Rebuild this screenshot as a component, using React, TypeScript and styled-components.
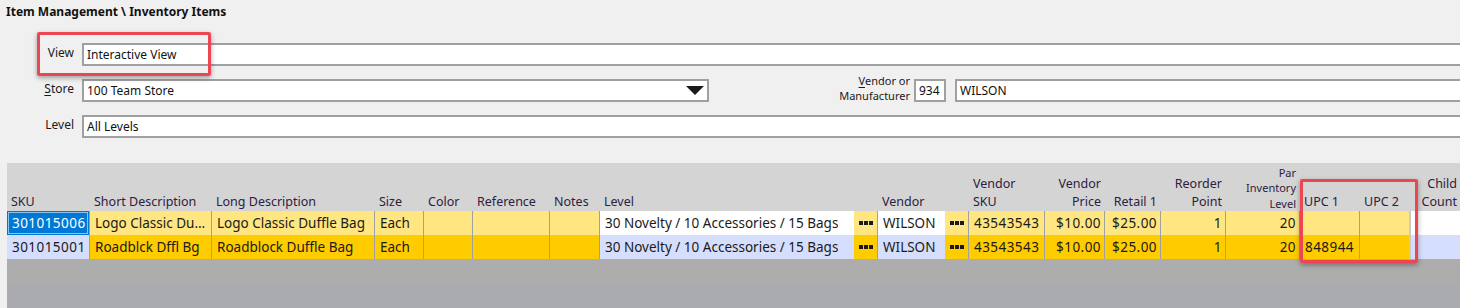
import React from 'react';
import styled, { createGlobalStyle } from 'styled-components';

const GlobalStyle = createGlobalStyle`
  html, body {
    margin: 0;
    padding: 0;
    background: #f0f0f0;
    overflow: hidden;
  }
  body {
    font-family: "Noto Sans", "Open Sans", Arial, sans-serif;
    color: #1a1a1a;
  }
`;

const Screen = styled.div`
  position: relative;
  width: 1500px;
  height: 308px;
  overflow: hidden;
  background: #f0f0f0;
`;

const Title = styled.div`
  height: 24px;
  box-sizing: border-box;
  padding: 4px 0 0 6px;
  font-size: 12px;
  font-weight: 700;
  line-height: 16px;
  color: #111;
`;

const Form = styled.div`
  display: flex;
  flex-direction: column;
  gap: 13px;
  padding-top: 19px;
`;

const FieldRow = styled.div`
  display: flex;
  align-items: flex-start;
  height: 23px;
`;

const Label = styled.label`
  width: 78px;
  box-sizing: border-box;
  padding: 2px 4px 0 0;
  margin-right: 4px;
  text-align: right;
  font-size: 12px;
  line-height: 16px;
  color: #1a1a1a;

  u {
    text-decoration: underline;
    text-underline-offset: 2px;
  }
`;

const TextBox = styled.div<{ $width?: number }>`
  ${(p) => (p.$width ? `width: ${p.$width}px; flex: none;` : 'flex: 1;')}
  height: 23px;
  box-sizing: border-box;
  border: 2px solid #a0a0a0;
  background: #fff;
  display: flex;
  align-items: center;
  justify-content: space-between;
  padding: 0 3px 0 3px;
  font-size: 12px;
  color: #111;
  white-space: nowrap;
`;

const DropArrow = styled.span`
  width: 0;
  height: 0;
  border-left: 9px solid transparent;
  border-right: 9px solid transparent;
  border-top: 9px solid #1a1a1a;
`;

const VendorLabel = styled.label`
  width: 205px;
  box-sizing: border-box;
  padding-right: 4px;
  margin-top: -6px;
  text-align: right;
  font-size: 11px;
  line-height: 15px;
  color: #1a1a1a;

  u {
    text-underline-offset: 2px;
  }
`;

const Spacer = styled.div<{ $w: number }>`
  width: ${(p) => p.$w}px;
  flex: none;
`;

const GridPanel = styled.div`
  margin: 25px 0 0 7px;
  background: #aaabaf;
  height: 145px;
  display: flex;
  flex-direction: column;
`;

const Grid = styled.div<{ $cols: string }>`
  display: grid;
  grid-template-columns: ${(p) => p.$cols};
  grid-template-rows: 48px 24px 24px;
  background: #d4d4d4;
`;

const HeaderCell = styled.div<{ $align: string; $small?: boolean }>`
  display: flex;
  flex-direction: column;
  justify-content: flex-end;
  align-items: ${(p) => (p.$align === 'right' ? 'flex-end' : 'flex-start')};
  text-align: ${(p) => p.$align};
  padding: 0 4px 0 4px;
  font-size: ${(p) => (p.$small ? '11px' : '12.5px')};
  line-height: ${(p) => (p.$small ? '15.5px' : '18px')};
  color: #2e2040;
  white-space: nowrap;
  overflow: hidden;
`;

type CellKind = 'text' | 'entry' | 'button' | 'sku' | 'child';

const cellBg = (kind: CellKind, row: number) => {
  if (kind === 'sku') return row === 0 ? '#0078d7' : '#d5defd';
  if (kind === 'entry' || kind === 'child') return row === 0 ? '#ffffff' : '#d5defd';
  return row === 0 ? '#ffe680' : '#ffcc00';
};

const Cell = styled.div<{ $kind: CellKind; $row: number; $align: string; $line: string; $num?: boolean }>`
  display: flex;
  align-items: center;
  justify-content: ${(p) =>
    p.$kind === 'button' ? 'center' : p.$align === 'right' ? 'flex-end' : 'flex-start'};
  min-width: 0;
  padding: 0 ${(p) => (p.$kind === 'button' ? 0 : 3)}px 0 ${(p) => (p.$kind === 'button' ? 0 : 5)}px;
  background: ${(p) => cellBg(p.$kind, p.$row)};
  border-right: ${(p) => p.$line};
  font-size: 13.5px;
  letter-spacing: ${(p) => (p.$num ? '0.45px' : '0')};
  color: ${(p) => (p.$kind === 'sku' && p.$row === 0 ? '#fff' : '#1a1a1a')};
  white-space: nowrap;
  overflow: hidden;
  box-shadow: ${(p) =>
    p.$kind === 'sku' && p.$row === 0 ? 'inset 0 0 0 1px #0078d7, inset 0 0 0 2px #8cc2ee' : 'none'};
`;

const CellText = styled.span`
  display: block;
  min-width: 0;
  overflow: hidden;
  text-overflow: ellipsis;
`;

const Dots = styled.span`
  display: flex;
  gap: 1px;

  i {
    display: block;
    width: 4px;
    height: 4px;
    background: #1a1a1a;
  }
`;

const Filler = styled.div`
  height: 24px;
  background: #adadad;
`;

const Highlight = styled.div<{ $x: number; $y: number; $w: number; $h: number }>`
  position: absolute;
  left: ${(p) => p.$x}px;
  top: ${(p) => p.$y}px;
  width: ${(p) => p.$w}px;
  height: ${(p) => p.$h}px;
  box-sizing: border-box;
  border: 3px solid #ec4652;
  border-radius: 2px;
  box-shadow: 0 2px 5px rgba(0, 0, 0, 0.35);
  pointer-events: none;
`;

interface Column {
  title: string[];
  width: number;
  align: 'left' | 'right';
  kind: CellKind;
  line?: string;
  small?: boolean;
  num?: boolean;
  values: [string, string];
}

const GRID_LINE = '1px solid #a0a0a0';

const columns: Column[] = [
  { title: ['SKU'], width: 83, align: 'left', kind: 'sku', num: true, values: ['301015006', '301015001'] },
  { title: ['Short Description'], width: 122, align: 'left', kind: 'text', values: ['Logo Classic Duffle Bag', 'Roadblck Dffl Bg'] },
  { title: ['Long Description'], width: 163, align: 'left', kind: 'text', values: ['Logo Classic Duffle Bag', 'Roadblock Duffle Bag'] },
  { title: ['Size'], width: 49, align: 'left', kind: 'text', values: ['Each', 'Each'] },
  { title: ['Color'], width: 49, align: 'left', kind: 'text', values: ['', ''] },
  { title: ['Reference'], width: 77, align: 'left', kind: 'text', values: ['', ''] },
  { title: ['Notes'], width: 50, align: 'left', kind: 'text', values: ['', ''] },
  { title: ['Level'], width: 254, align: 'left', kind: 'entry', line: 'none', values: ['30 Novelty / 10 Accessories / 15 Bags', '30 Novelty / 10 Accessories / 15 Bags'] },
  { title: [''], width: 24, align: 'left', kind: 'button', values: ['', ''] },
  { title: ['Vendor'], width: 67, align: 'left', kind: 'entry', line: 'none', values: ['WILSON', 'WILSON'] },
  { title: [''], width: 24, align: 'left', kind: 'button', values: ['', ''] },
  { title: ['Vendor', 'SKU'], width: 76, align: 'left', kind: 'text', num: true, values: ['43543543', '43543543'] },
  { title: ['Vendor', 'Price'], width: 60, align: 'right', kind: 'text', num: true, values: ['$10.00', '$10.00'] },
  { title: ['Retail 1'], width: 56, align: 'right', kind: 'text', num: true, values: ['$25.00', '$25.00'] },
  { title: ['Reorder', 'Point'], width: 65, align: 'right', kind: 'text', num: true, values: ['1', '1'] },
  { title: ['Par', 'Inventory', 'Level'], width: 74, align: 'right', kind: 'text', small: true, num: true, values: ['20', '20'] },
  { title: ['UPC 1'], width: 60, align: 'left', kind: 'text', num: true, values: ['', '848944'] },
  { title: ['UPC 2'], width: 51, align: 'left', kind: 'text', line: '2px solid #c9c9c9', values: ['', ''] },
  { title: ['Child', 'Count'], width: 50, align: 'right', kind: 'child', line: 'none', values: ['', ''] },
];

export default function App() {
  const template = columns.map((c) => `${c.width}px`).join(' ') + ' 1fr';
  return (
    <Screen>
      <GlobalStyle />
      <Title>Item Management \ Inventory Items</Title>
      <Form>
        <FieldRow>
          <Label>View</Label>
          <TextBox>Interactive View</TextBox>
        </FieldRow>
        <FieldRow>
          <Label>
            <u>S</u>tore
          </Label>
          <TextBox $width={627}>
            100 Team Store
            <DropArrow />
          </TextBox>
          <VendorLabel>
            <u>V</u>endor or
            <br />
            Manufacturer
          </VendorLabel>
          <TextBox $width={32}>934</TextBox>
          <Spacer $w={9} />
          <TextBox>WILSON</TextBox>
        </FieldRow>
        <FieldRow>
          <Label>Level</Label>
          <TextBox>All Levels</TextBox>
        </FieldRow>
      </Form>

      <GridPanel>
        <Grid $cols={template}>
          {columns.map((c, i) => (
            <HeaderCell key={`h${i}`} $align={c.align} $small={c.small}>
              {c.title.map((t, j) => (
                <span key={j}>{t}</span>
              ))}
            </HeaderCell>
          ))}
          <HeaderCell $align="left" />
          {[0, 1].map((row) => (
            <React.Fragment key={row}>
              {columns.map((c, i) => (
                <Cell
                  key={`${row}-${i}`}
                  $kind={c.kind}
                  $row={row}
                  $align={c.align}
                  $num={c.num}
                  $line={c.line ?? GRID_LINE}
                >
                  {c.kind === 'button' ? (
                    <Dots>
                      <i />
                      <i />
                      <i />
                    </Dots>
                  ) : (
                    <CellText>{c.values[row]}</CellText>
                  )}
                </Cell>
              ))}
              <Cell $kind="child" $row={row} $align="left" $line="none" />
            </React.Fragment>
          ))}
        </Grid>
        <Filler />
      </GridPanel>

      <Highlight $x={37} $y={32} $w={174} $h={44} />
      <Highlight $x={1300} $y={179} $w={118} $h={84} />
    </Screen>
  );
}
